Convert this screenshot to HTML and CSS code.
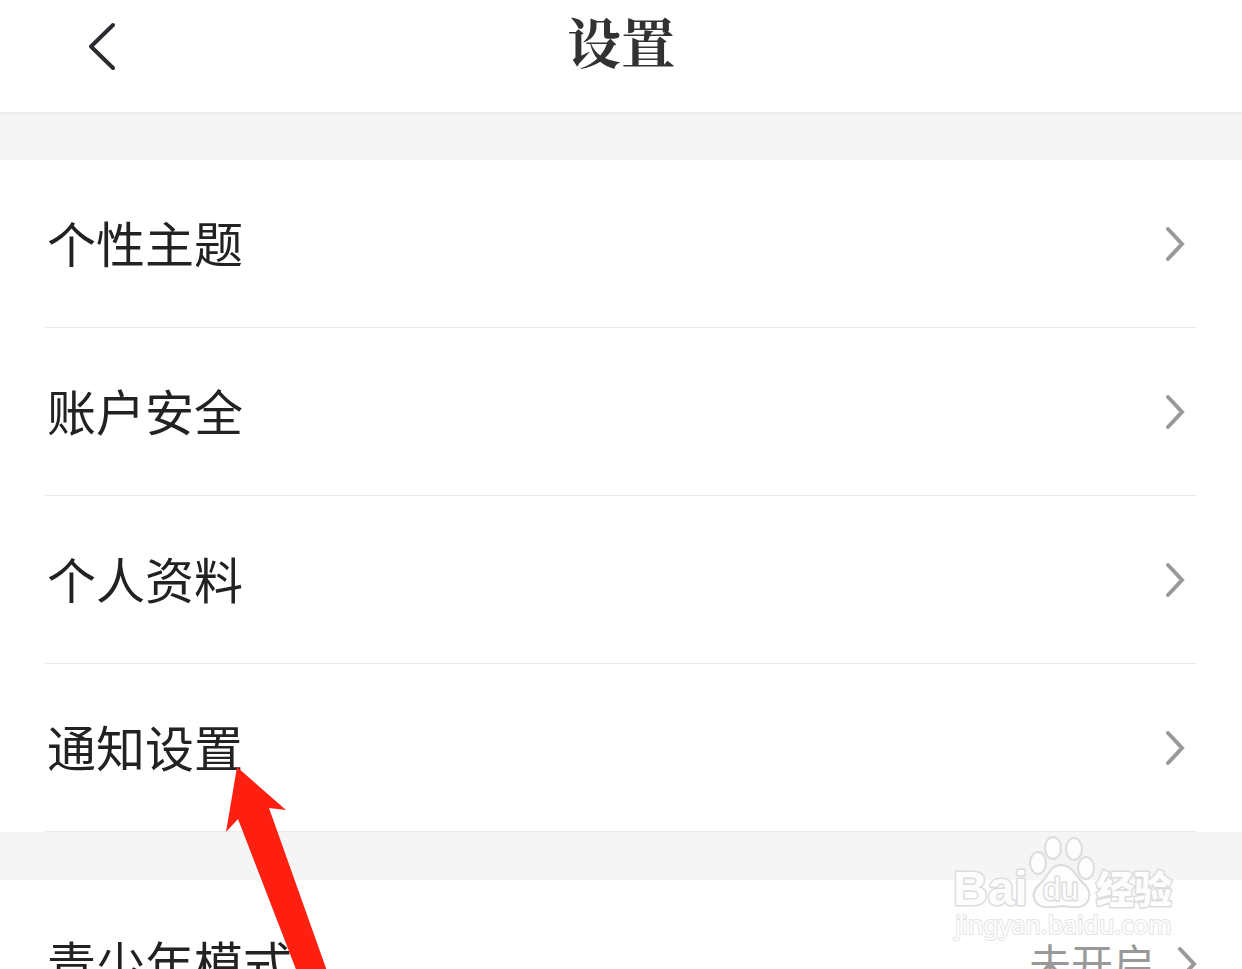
FILE: index.html
```html
<!DOCTYPE html>
<html lang="zh-CN">
<head>
<meta charset="utf-8">
<meta name="viewport" content="width=device-width, initial-scale=1">
<title>设置</title>
<link rel="stylesheet" href="styles.css">
</head>
<body>
<div class="screen">
  <header class="header">
    <button class="back" type="button" aria-label="返回">
      <svg width="32" height="52" viewBox="0 0 32 52"><path d="M27 5L5 26.500L27 48"/></svg>
    </button>
    <h1 class="title">设置</h1>
  </header>
  <main class="groups">
    <nav class="group">
      <a class="row" href="#theme"><span class="label">个性主题</span><svg class="chevron" width="20" height="36" viewBox="0 0 20 36"><path d="M3 3L17 18L3 33"/></svg></a>
      <a class="row" href="#security"><span class="label">账户安全</span><svg class="chevron" width="20" height="36" viewBox="0 0 20 36"><path d="M3 3L17 18L3 33"/></svg></a>
      <a class="row" href="#profile"><span class="label">个人资料</span><svg class="chevron" width="20" height="36" viewBox="0 0 20 36"><path d="M3 3L17 18L3 33"/></svg></a>
      <a class="row" href="#notify"><span class="label">通知设置</span><svg class="chevron" width="20" height="36" viewBox="0 0 20 36"><path d="M3 3L17 18L3 33"/></svg></a>
    </nav>
    <nav class="group">
      <a class="row row-wide" href="#youth"><span class="label">青少年模式</span><span class="value">未开启</span><svg class="chevron" width="20" height="36" viewBox="0 0 20 36"><path d="M3 3L17 18L3 33"/></svg></a>
    </nav>
  </main>
  <svg class="pointer" width="112" height="220" viewBox="0 0 112 220" aria-hidden="true"><path d="M17 2L66 45L49 43L112 220L82 220L18 54L6 67Z"/></svg>
  <svg class="watermark" width="232" height="112" viewBox="0 0 232 112">
    <text class="wm-bai" x="3" y="75">Bai</text>
    <g class="wm-paw">
      <ellipse cx="88" cy="33" rx="8" ry="11"/>
      <ellipse cx="103" cy="18" rx="8" ry="11"/>
      <ellipse cx="124" cy="19" rx="8" ry="11"/>
      <ellipse cx="136" cy="38" rx="8" ry="11"/>
      <path d="M111 35C121 35 125 44 131 51C138 57 141 62 139 68C136 79 126 78 112 76C98 78 87 79 84 68C82 62 86 57 93 51C99 44 101 35 111 35Z"/>
    </g>
    <text class="wm-du" x="93" y="70">du</text>
    <text class="wm-cn" x="146" y="73">经验</text>
    <text class="wm-url" x="5" y="104">jingyan.baidu.com</text>
  </svg>
</div>
</body>
</html>
```
FILE: styles.css
```css
* { box-sizing: border-box; }

body {
  margin: 0;
  background: #fff;
  color: #222;
  font-family: "Noto Sans CJK SC", sans-serif;
}

.screen {
  position: relative;
  height: 100vh;
  overflow: hidden;
}

.header {
  display: grid;
  grid-template-columns: 1fr auto 1fr;
  align-items: center;
  height: 114px;
  padding: 0 86px 20px;
  border-bottom: 2px solid #eee;
}

.back {
  display: flex;
  justify-self: start;
  padding: 0;
  border: 0;
  background: none;
  cursor: pointer;
}

.back path {
  fill: none;
  stroke: #2b2b30;
  stroke-width: 4;
  stroke-linecap: round;
  stroke-linejoin: round;
}

.title {
  margin: 0;
  padding-bottom: 10px;
  color: #303234;
  font-family: "Noto Serif CJK SC", "Noto Serif SC", "Source Han Serif SC", "Noto Sans CJK SC", serif;
  font-size: 54px;
  line-height: 80px;
  font-weight: 700;
}

.groups {
  display: flex;
  flex-direction: column;
  gap: 48px;
  padding-top: 46px;
  background: #f5f5f5;
}

.group {
  padding: 0 45px;
  background: #fff;
}

.row {
  display: flex;
  align-items: center;
  height: 168px;
  padding: 0 12px 0 2px;
  border-bottom: 1px solid #ebebeb;
  color: inherit;
  text-decoration: none;
}

.row-wide { padding-right: 0; }

.label {
  flex: 1;
  padding-bottom: 4px;
  font-size: 49px;
  line-height: 72px;
}

.value {
  margin-right: 22px;
  padding-bottom: 4px;
  color: #999;
  font-size: 42px;
  line-height: 60px;
}

.chevron path {
  fill: none;
  stroke: #999;
  stroke-width: 4;
  stroke-linecap: round;
  stroke-linejoin: miter;
}

.pointer {
  position: absolute;
  left: 220px;
  top: 765px;
  fill: #ff2011;
}

.watermark {
  position: absolute;
  right: 60px;
  top: 830px;
}

.watermark text,
.wm-paw {
  fill: #fdfdfd;
  stroke: #dcdcdc;
  stroke-width: 2;
  stroke-linejoin: round;
}

.watermark text {
  paint-order: stroke;
  stroke-width: 3;
}

.wm-bai {
  font: 700 48px "Liberation Sans", sans-serif;
}

.wm-du {
  font: 400 32px "Liberation Sans", sans-serif;
}

.wm-cn {
  font: 900 38px "Noto Sans CJK SC", sans-serif;
}

.watermark .wm-url {
  font: 400 25px "Noto Sans", sans-serif;
  stroke: #e4e4e4;
  stroke-width: 2;
}
```
